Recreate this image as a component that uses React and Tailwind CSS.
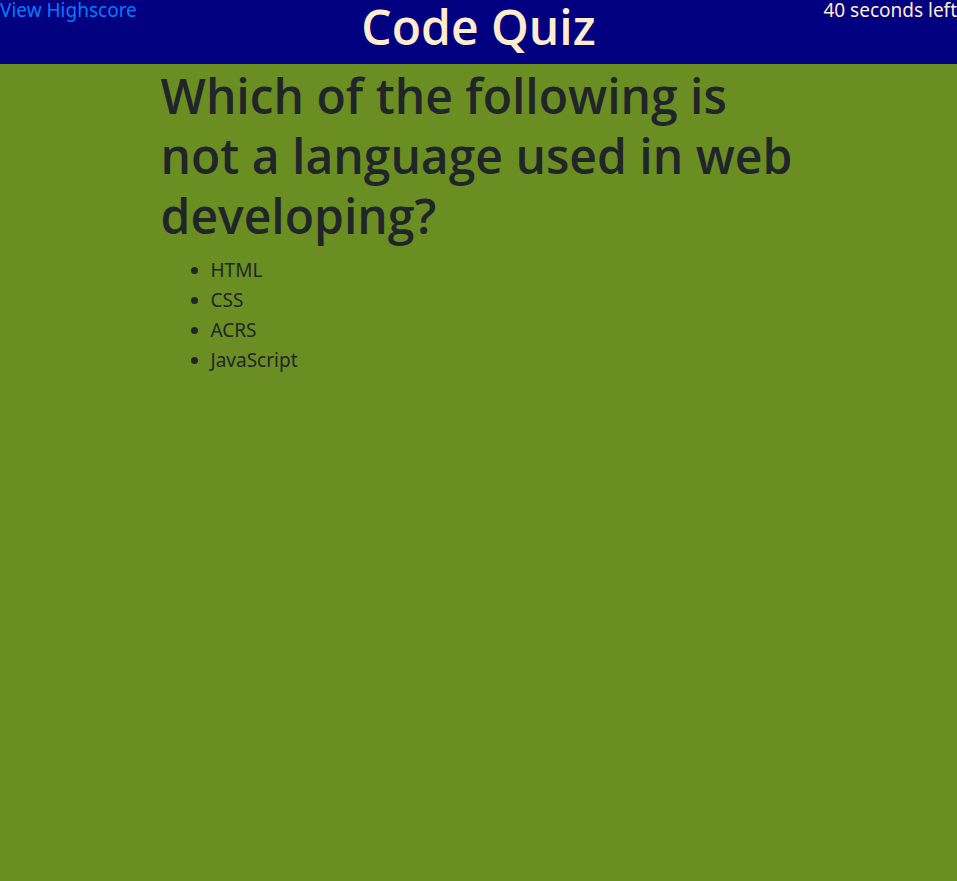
const choices = ["HTML", "CSS", "ACRS", "JavaScript"];

export default function App() {
  return (
    <div className="min-h-screen bg-[#6b8e23] font-['Noto_Sans','Open_Sans',sans-serif] text-[19px] leading-[30px] text-[#212529]">
      <header className="grid h-16 grid-cols-[1fr_auto_1fr] items-start bg-[#000080] text-[#ffebcd]">
        <a href="#highscore" className="justify-self-start leading-5 text-[#007bff]">
          View Highscore
        </a>
        <h1 className="font-['Open_Sans',sans-serif] text-5xl font-semibold leading-[54px]">Code Quiz</h1>
        <p className="justify-self-end whitespace-nowrap leading-5">40 seconds left</p>
      </header>
      <main className="mx-auto w-2/3 px-px pt-0.5">
        <h2 className="mb-[9px] font-['Open_Sans',sans-serif] text-5xl font-semibold leading-[60px]">
          Which of the following is not a language used in web developing?
        </h2>
        <ul className="list-disc pl-[50px]">
          {choices.map((choice) => (
            <li key={choice}>{choice}</li>
          ))}
        </ul>
      </main>
    </div>
  );
}
